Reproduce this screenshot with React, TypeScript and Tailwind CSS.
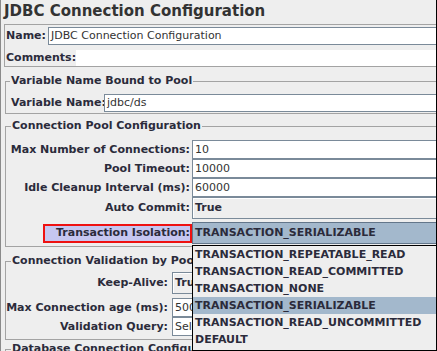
const isolationOptions = [
  'TRANSACTION_REPEATABLE_READ',
  'TRANSACTION_READ_COMMITTED',
  'TRANSACTION_NONE',
  'TRANSACTION_SERIALIZABLE',
  'TRANSACTION_READ_UNCOMMITTED',
  'DEFAULT',
];

function TextField({ value, className = '' }: { value?: string; className?: string }) {
  return (
    <div
      className={`flex-1 h-full border border-[#7a8a99] bg-white pl-[2px] font-normal text-[#333333] whitespace-nowrap overflow-hidden flex items-center ${className}`}
    >
      {value}
    </div>
  );
}

function Combo({ value, selected = false }: { value: string; selected?: boolean }) {
  return (
    <div
      className={
        selected
          ? 'flex-1 h-full border border-[#63768a] bg-[#a3b8cc] pl-[2px] font-bold flex items-center whitespace-nowrap overflow-hidden'
          : 'flex-1 h-full border border-[#7a8a99] bg-[#eeeeee] shadow-[inset_1px_1px_0_#ffffff] pl-[2px] font-bold flex items-center whitespace-nowrap overflow-hidden'
      }
    >
      {value}
    </div>
  );
}

function Row({
  label,
  labelWidth,
  height,
  children,
}: {
  label: string;
  labelWidth: string;
  height: string;
  children: React.ReactNode;
}) {
  return (
    <div className={`flex ${height}`}>
      <div className={`${labelWidth} shrink-0 flex items-center justify-end font-bold whitespace-nowrap`}>
        {label}
      </div>
      {children}
    </div>
  );
}

export default function App() {
  return (
    <div className="relative w-[437px] h-[351px] overflow-hidden bg-[#eeeeee] border-l border-l-[#8a8a8a] border-r border-r-black font-['DejaVu_Sans',sans-serif] text-[11px] leading-[14px] text-[#2b2b3b]">
      {/* Title */}
      <div className="h-[24px] pt-[2px] pl-[3px] text-[15px] font-bold leading-[18px] text-[#333333] whitespace-nowrap">
        JDBC Connection Configuration
      </div>

      {/* Name / Comments */}
      <div className="ml-[3px] -mr-[20px] border-y border-l border-[#a3a3a3] pt-[2px] pl-[1px]">
        <div className="flex h-[18px]">
          <div className="w-[42px] shrink-0 flex items-center font-bold whitespace-nowrap">Name:</div>
          <TextField value="JDBC Connection Configuration" />
        </div>
        <div className="flex h-[16px] mt-[5px]">
          <div className="w-[70px] shrink-0 flex items-center font-bold whitespace-nowrap">Comments:</div>
          <div className="flex-1 bg-white" />
        </div>
      </div>

      {/* Variable Name Bound to Pool */}
      <fieldset className="mt-[7px] ml-[4px] -mr-[20px] border border-[#a3a3a3] pb-[1px]">
        <legend className="ml-[4px] px-[1px] font-bold leading-[14px] whitespace-nowrap">Variable Name Bound to Pool</legend>
        <div className="flex h-[18px] mt-[6px]">
          <div className="w-[98px] shrink-0 pl-[5px] flex items-center font-bold whitespace-nowrap">Variable Name:</div>
          <TextField value="jdbc/ds" />
        </div>
      </fieldset>

      {/* Connection Pool Configuration */}
      <fieldset className="mt-[5px] ml-[4px] -mr-[20px] border border-[#a3a3a3] pb-[2px]">
        <legend className="ml-[5px] px-[1px] font-bold leading-[14px] whitespace-nowrap">Connection Pool Configuration</legend>
        <div className="mt-[7px] flex flex-col">
          <Row label="Max Number of Connections:" labelWidth="w-[186px] pr-[2px]" height="h-[19px]">
            <TextField value="10" />
          </Row>
          <Row label="Pool Timeout:" labelWidth="w-[186px] pr-[2px]" height="h-[19px]">
            <TextField value="10000" />
          </Row>
          <Row label="Idle Cleanup Interval (ms):" labelWidth="w-[186px] pr-[2px]" height="h-[19px]">
            <TextField value="60000" />
          </Row>
          <Row label="Auto Commit:" labelWidth="w-[186px] pr-[2px]" height="h-[22px]">
            <Combo value="True" />
          </Row>
          <div className="flex h-[22px] mt-[3px]">
            <div className="w-[186px] shrink-0 flex items-center justify-end">
              <div className="w-[149px] h-[19px] border-2 border-[#ee1111] bg-[#c6c6f0] flex items-center justify-end font-bold whitespace-nowrap">
                Transaction Isolation:
              </div>
            </div>
            <Combo value="TRANSACTION_SERIALIZABLE" selected />
          </div>
        </div>
      </fieldset>

      {/* Connection Validation by Pool */}
      <fieldset className="mt-[7px] ml-[4px] -mr-[20px] border border-[#a3a3a3] pb-[3px]">
        <legend className="ml-[5px] px-[1px] font-bold leading-[14px] whitespace-nowrap">Connection Validation by Pool</legend>
        <div className="mt-[4px] flex flex-col">
          <Row label="Keep-Alive:" labelWidth="w-[166px] pr-[4px]" height="h-[22px]">
            <Combo value="True" />
          </Row>
          <div className="mt-[4px]" />
          <Row label="Max Connection age (ms):" labelWidth="w-[166px] pr-[4px]" height="h-[19px]">
            <TextField value="5000" />
          </Row>
          <Row label="Validation Query:" labelWidth="w-[166px] pr-[4px]" height="h-[19px]">
            <TextField value="Select 1" />
          </Row>
        </div>
      </fieldset>

      {/* Database Connection Configuration */}
      <fieldset className="mt-[2px] ml-[4px] -mr-[20px] border border-[#a3a3a3] h-[60px]">
        <legend className="ml-[5px] px-[1px] font-bold leading-[14px] whitespace-nowrap">Database Connection Configuration</legend>
      </fieldset>

      {/* Open combo popup */}
      <div className="absolute left-[191px] top-[245px] w-[260px] border border-black bg-[#eeeeee] pb-[2px]">
        {isolationOptions.map((opt) => (
          <div
            key={opt}
            className={`h-[17px] pl-[2px] flex items-center font-bold whitespace-nowrap ${
              opt === 'TRANSACTION_SERIALIZABLE' ? 'bg-[#a3b8cc]' : ''
            }`}
          >
            {opt}
          </div>
        ))}
      </div>
    </div>
  );
}
